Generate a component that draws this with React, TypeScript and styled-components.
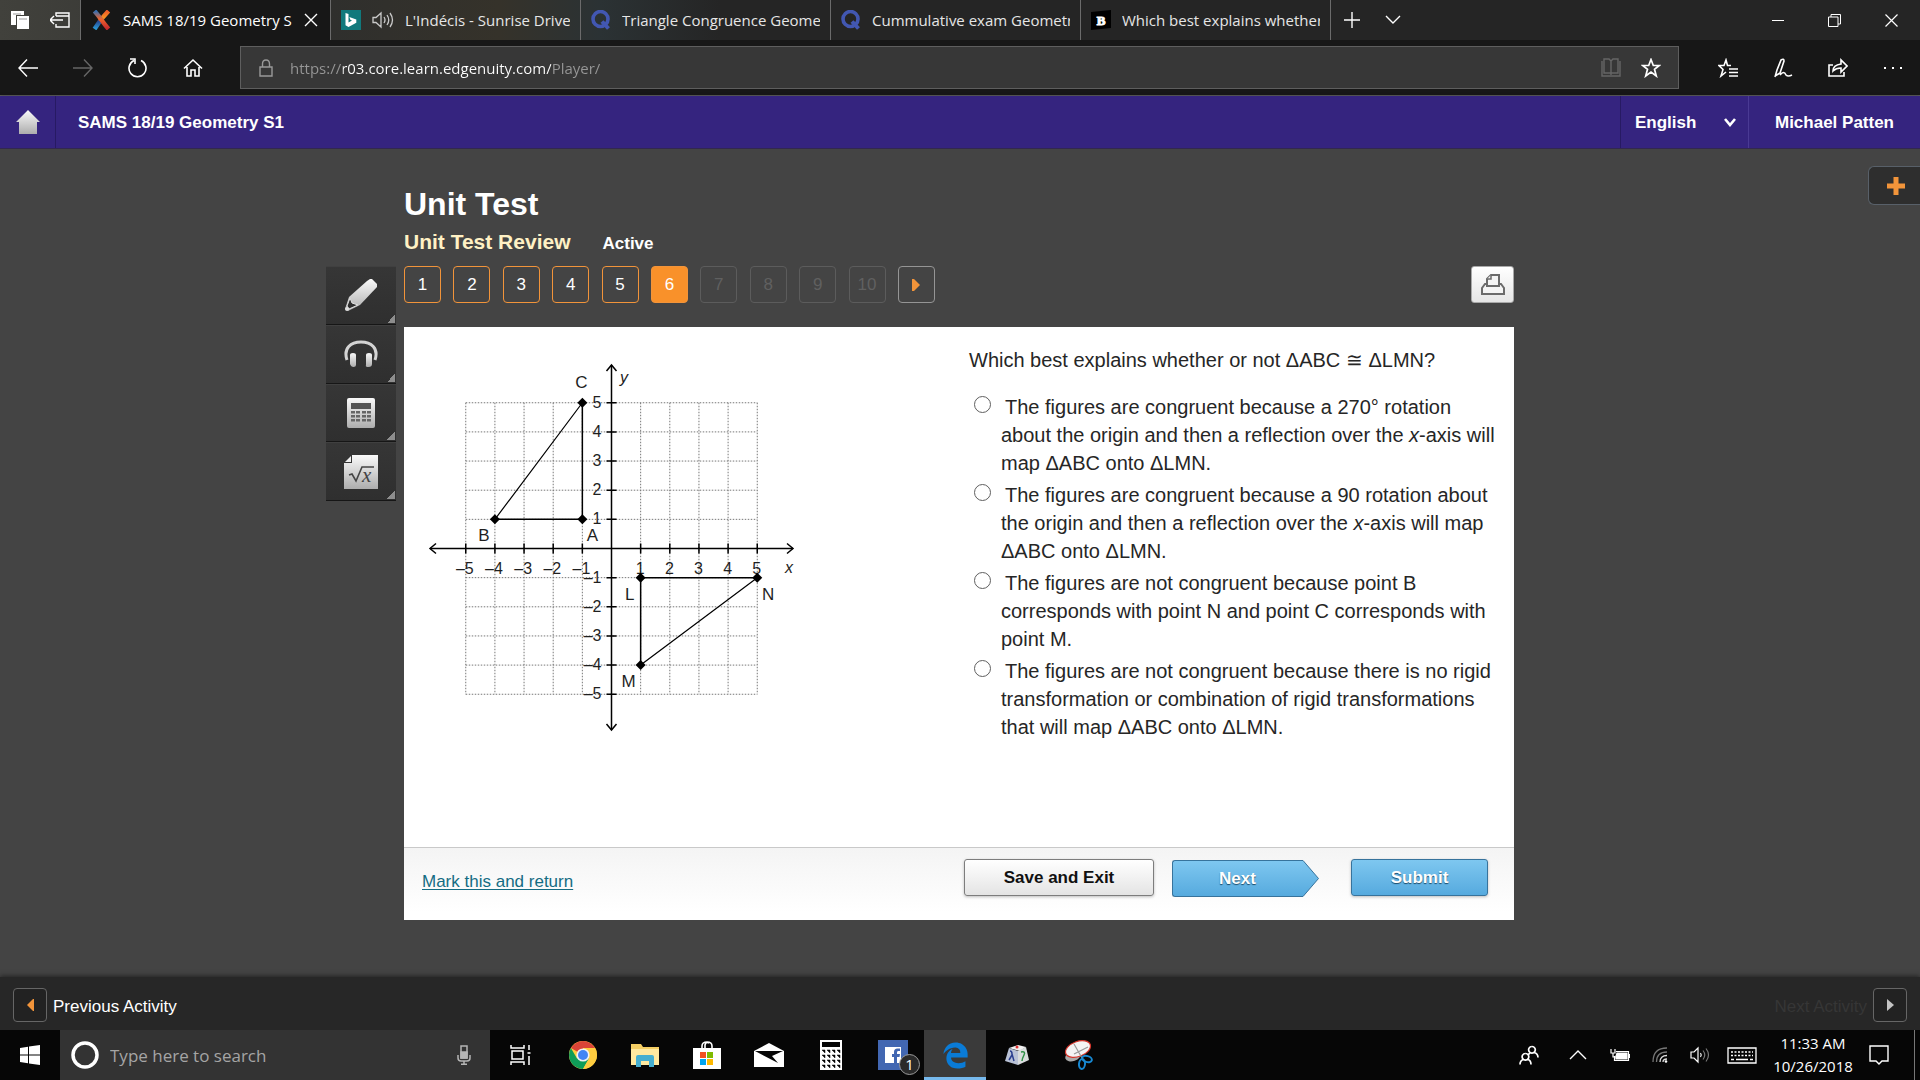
import React, { useState } from "react";
import styled, { createGlobalStyle, css } from "styled-components";
import { FaEdgeLegacy } from "react-icons/fa";

const ui = `"Open Sans", "Noto Sans", sans-serif`;
const arial = `"Liberation Sans", Arial, sans-serif`;

const GlobalStyle = createGlobalStyle`
  * { box-sizing: border-box; }
  html, body { margin: 0; padding: 0; background: #444; }
  body { font-family: ${arial}; }
  button, input, select { font: inherit; color: inherit; margin: 0; }
  button { padding: 0; border: 0; background: none; cursor: pointer; }
  svg { display: block; flex: none; }
`;

const Screen = styled.div`
  min-height: 100vh;
  display: flex;
  flex-direction: column;
`;

/* ---------- browser chrome ---------- */

const TabStrip = styled.div`
  display: flex;
  height: 40px;
  background: linear-gradient(90deg, #41413c 0, #2f2f2d 330px, #35322a 500px, #2b3234 600px, #252525 720px, #252525 100%);
  color: #e6e6e6;
  font-family: ${ui};
  font-size: 15px;
`;

const StripActions = styled.div`
  width: 81px;
  display: flex;
  align-items: center;
  justify-content: space-between;
  padding: 0 10px 0 11px;
  border-right: 1px solid #6b6b6b;
`;

const Tab = styled.div<{ $active?: boolean }>`
  width: 250px;
  display: flex;
  align-items: center;
  padding: 0 10px;
  border-right: 1px solid #6b6b6b;
  ${(p) => p.$active && css`padding-right: 0; background: #171717; color: #fff;`}
`;

const TabLabel = styled.button`
  flex: 1;
  min-width: 0;
  display: flex;
  align-items: center;
  gap: 11px;
  text-align: left;
  line-height: 24px;
`;

const TabTitle = styled.span`
  flex: 1;
  min-width: 0;
  overflow: hidden;
  white-space: nowrap;
`;

const IconButton = styled.button<{ $w?: number }>`
  width: ${(p) => p.$w ?? 55}px;
  height: 40px;
  display: grid;
  place-items: center;
  flex: none;
`;

const WindowButtons = styled.div`
  margin-left: auto;
  display: flex;
`;

const AddressRow = styled.div`
  height: 56px;
  display: flex;
  align-items: center;
  background: #171717;
  border-bottom: 1px solid #5b5b5b;
  color: #fff;
`;

const NavButtons = styled.div`
  width: 240px;
  display: flex;
`;

const AddressBox = styled.div`
  flex: 1;
  height: 43px;
  display: flex;
  align-items: center;
  padding: 0 7px 0 18px;
  background: #373737;
  border: 1px solid #5e5e5e;
`;

const AddressInput = styled.input`
  flex: 1;
  min-width: 0;
  height: 30px;
  margin-left: 17px;
  padding: 0;
  border: 0;
  outline: 0;
  font-family: ${ui};
  font-size: 15px;
  background: linear-gradient(90deg, #979797 53px, #fff 53px, #fff 261px, #979797 261px);
  -webkit-background-clip: text;
  background-clip: text;
  -webkit-text-fill-color: transparent;
`;

const BrowserTools = styled.div`
  display: flex;
  padding-left: 21px;
`;

/* ---------- course header ---------- */

const CourseBar = styled.header`
  height: 53px;
  display: flex;
  align-items: center;
  background: #35247f;
  border-bottom: 1px solid #32284f;
  box-shadow: 0 1px 4px rgba(0, 0, 0, 0.4);
  color: #fff;
  font-size: 17px;
  font-weight: bold;
`;

const HomeLink = styled.a`
  width: 56px;
  height: 100%;
  display: grid;
  place-items: center;
  border-right: 1px solid #271a63;
`;

const CourseName = styled.span`
  flex: 1;
  padding: 2px 0 0 22px;
`;

const LanguageBox = styled.label`
  width: 129px;
  height: 100%;
  display: flex;
  align-items: center;
  justify-content: space-between;
  padding: 0 12px 0 14px;
  border-left: 1px solid #271a63;
  border-right: 1px solid #4a3a94;
`;

const LanguageSelect = styled.select`
  appearance: none;
  width: 80px;
  border: 0;
  padding: 0;
  background: transparent;
  font-weight: bold;
`;

const UserName = styled.button`
  width: 171px;
  height: 100%;
  padding-top: 2px;
  font-weight: bold;
`;

/* ---------- test stage ---------- */

const Stage = styled.main`
  flex: 1;
  display: grid;
  grid-template-columns: 1fr minmax(0, 1110px) 1fr;
  padding: 0 2px 57px 0;
  background: #444;
`;

const ToolRail = styled.div`
  justify-self: end;
  align-self: start;
  width: 70px;
  height: 235px;
  margin: 117px 8px 0 0;
  display: flex;
  flex-direction: column;
`;

const ToolButton = styled.button`
  flex: 1;
  display: grid;
  place-items: center;
  background:
    linear-gradient(135deg, transparent 50%, #8d8d8d 50%) right 1px bottom 1px / 8px 8px no-repeat,
    linear-gradient(#363636, #2f2f2f);
  border-bottom: 1px solid #161616;
  border-top: 1px solid #404040;
`;

const TestColumn = styled.div`
  display: flex;
  flex-direction: column;
  padding-top: 37px;
`;

const TestTitle = styled.h1`
  margin: 0;
  color: #fff;
  font-size: 32px;
  line-height: 36px;
`;

const TestSubtitle = styled.div`
  display: flex;
  align-items: baseline;
  gap: 32px;
  margin-top: 8px;
  line-height: 24px;
`;

const ReviewName = styled.h2`
  margin: 0;
  color: #fff1c4;
  font-size: 21px;
`;

const Status = styled.span`
  color: #fff;
  font-size: 17px;
  font-weight: bold;
`;

const QuestionNav = styled.div`
  display: flex;
  justify-content: space-between;
  align-items: center;
  margin: 10px 0 24px;
`;

const QuestionList = styled.nav`
  width: 531px;
  display: flex;
  justify-content: space-between;
`;

type QState = "done" | "current" | "locked" | "next";

const QuestionButton = styled.button<{ $state: QState }>`
  width: 37px;
  height: 37px;
  display: grid;
  place-items: center;
  border: 1px solid #f2943a;
  border-radius: 4px;
  color: #fff;
  font-size: 17px;
  ${(p) => p.$state === "current" && css`background: #f9912a;`}
  ${(p) => p.$state === "locked" && css`border-color: #5c5c5c; color: #606060;`}
  ${(p) => p.$state === "next" && css`border-color: #959595;`}
`;

const PrintButton = styled.button`
  width: 43px;
  height: 37px;
  display: grid;
  place-items: center;
  border: 1px solid #a9a9a9;
  border-radius: 3px;
  background: linear-gradient(#fff, #e6e6e6);
`;

const Card = styled.section`
  flex: 1;
  display: flex;
  flex-direction: column;
  background: #fff;
  color: #262626;
`;

const CardBody = styled.div`
  flex: 1;
  display: grid;
  grid-template-columns: 1fr 1fr;
`;

const Figure = styled.div`
  padding: 23px 16px;
`;

const QuestionPane = styled.fieldset`
  min-width: 0;
  margin: 0;
  padding: 19px 18px 0 10px;
  border: 0;
  font-size: 20px;
  line-height: 28px;
`;

const Prompt = styled.p`
  margin: 0 0 19px;
`;

const Congruent = styled.span`
  font-family: "Liberation Serif", "DejaVu Serif", serif;
`;

const OptionRow = styled.label`
  display: flex;
  gap: 10px;
  padding-left: 5px;
  margin-bottom: 4px;
`;

const Radio = styled.input`
  appearance: none;
  flex: none;
  width: 17px;
  height: 17px;
  margin: 3px 0 0;
  border: 1px solid #5f5f5f;
  border-radius: 50%;
  background: #fff;
  &:checked { background: radial-gradient(#333 0 4px, #fff 5px); }
`;

const OptionText = styled.span`
  text-indent: 4px;
`;

const CardFooter = styled.div`
  height: 73px;
  display: flex;
  align-items: flex-start;
  padding: 11px 26px 0 18px;
  border-top: 1px solid #c9c9c9;
  background: linear-gradient(#f4f4f4, #fff 90%);
`;

const MarkLink = styled.a`
  margin-right: auto;
  padding-top: 12px;
  color: #146c83;
  font-size: 17px;
  line-height: 22px;
  text-underline-offset: 2px;
`;

const PushButton = styled.button<{ $blue?: boolean }>`
  width: ${(p) => (p.$blue ? 137 : 190)}px;
  height: 37px;
  border: 1px solid #7d7d7d;
  border-radius: 3px;
  background: linear-gradient(#fff, #e4e4e4);
  box-shadow: 0 1px 3px rgba(0, 0, 0, 0.25);
  color: #111;
  font-size: 17px;
  font-weight: bold;
  ${(p) => p.$blue && css`
    border-color: #37739c;
    background: linear-gradient(#7ec7f0, #56aade);
    color: #fff;
    text-shadow: 0 1px 1px #1c4a68;
  `}
`;

const NextButton = styled.button`
  width: 147px;
  height: 37px;
  display: flex;
  margin: 1px 32px 0 18px;
  color: #fff;
  font-size: 17px;
  font-weight: bold;
  text-shadow: 0 1px 1px #1c4a68;
`;

const NextFace = styled.span`
  flex: 1;
  height: 37px;
  line-height: 35px;
  border: 1px solid #37739c;
  border-right: 0;
  border-radius: 3px 0 0 3px;
  background: linear-gradient(#7ec7f0, #56aade);
`;

const SideDrawer = styled.button`
  justify-self: end;
  align-self: start;
  width: 52px;
  height: 39px;
  margin: 17px -2px 0 0;
  display: grid;
  place-items: center;
  padding-left: 2px;
  border: 1px solid #586069;
  border-right: 0;
  border-radius: 6px 0 0 6px;
  background: #2e2e2e;
`;

const ActivityBar = styled.footer`
  height: 53px;
  display: flex;
  align-items: center;
  justify-content: space-between;
  padding: 3px 13px 0;
  background: #272727;
  box-shadow: 0 -1px 5px rgba(0, 0, 0, 0.5);
`;

const ActivityButton = styled.button<{ $dim?: boolean }>`
  display: flex;
  align-items: center;
  gap: 6px;
  color: ${(p) => (p.$dim ? "#363636" : "#fff")};
  font-size: 17px;
`;

const ActivityLabel = styled.span`
  padding-top: 3px;
`;

const ActivityIcon = styled.span`
  width: 34px;
  height: 34px;
  display: grid;
  place-items: center;
  border: 1px solid #666;
  border-radius: 4px;
  background: #222;
`;

/* ---------- taskbar ---------- */

const Taskbar = styled.div`
  height: 50px;
  display: flex;
  background: #060606;
  color: #fff;
  font-family: ${ui};
`;

const StartButton = styled.button`
  width: 60px;
  display: grid;
  place-items: center;
`;

const SearchBox = styled.label`
  width: 430px;
  display: flex;
  align-items: center;
  padding: 0 19px 0 11px;
  background: #333;
`;

const SearchInput = styled.input`
  flex: 1;
  min-width: 0;
  margin-left: 11px;
  padding: 0;
  border: 0;
  outline: 0;
  background: transparent;
  font-size: 17px;
  &::placeholder { color: #a5a5a5; opacity: 1; }
`;

const TaskItem = styled.button<{ $active?: boolean }>`
  position: relative;
  width: 62px;
  display: grid;
  place-items: center;
  ${(p) => p.$active && css`background: #3a3a3a; box-shadow: inset 0 -3px #76b9ed;`}
`;

const Badge = styled.span`
  position: absolute;
  left: 37px;
  top: 24px;
  width: 21px;
  height: 21px;
  border: 1px solid #9a9a9a;
  border-radius: 50%;
  background: #2a2a2a;
  font-size: 15px;
  line-height: 19px;
  text-align: center;
`;

const Tray = styled.div`
  margin-left: auto;
  display: flex;
  padding-right: 5px;
`;

const TrayItem = styled.button<{ $w: number }>`
  width: ${(p) => p.$w}px;
  display: grid;
  place-items: center;
`;

const Clock = styled.div`
  width: 96px;
  padding-top: 2px;
  font-size: 15px;
  line-height: 23px;
  text-align: center;
`;

const Notifications = styled(TrayItem)`
  padding-right: 18px;
  border-right: 1px solid #777;
`;

/* ---------- icons ---------- */

type LineProps = {
  w?: number;
  h?: number;
  d: string;
  color?: string;
  sw?: number;
  fill?: string;
};

const Line = ({ w = 20, h = 20, d, color = "#fff", sw = 1.4, fill = "none" }: LineProps) => (
  <svg width={w} height={h} viewBox={`0 0 ${w} ${h}`} fill={fill} stroke={color} strokeWidth={sw} aria-hidden="true">
    <path d={d} />
  </svg>
);

const TabsAsideIcon = () => (
  <svg width="18" height="18" viewBox="0 0 18 18" aria-hidden="true">
    <path d="M0 0h13v4H5v10H0z" fill="#fff" />
    <path d="M6 5h12v13H6z" fill="#fff" />
    <path d="M2 3h8M8 8h8" stroke="#999" />
  </svg>
);

const EdgenuityLogo = () => (
  <svg width="21" height="20" viewBox="0 0 21 20" fill="none" strokeWidth="4.5" aria-hidden="true">
    <defs>
      <linearGradient id="ed" x1="0" y1="0" x2="0" y2="1">
        <stop offset="0" stopColor="#2f6fb4" /><stop offset=".45" stopColor="#f0642c" /><stop offset="1" stopColor="#c1272d" />
      </linearGradient>
      <linearGradient id="eu" x1="0" y1="1" x2="0" y2="0">
        <stop offset="0" stopColor="#2a9ad6" /><stop offset=".45" stopColor="#27458f" /><stop offset=".6" stopColor="#f7941e" /><stop offset="1" stopColor="#ee5a2a" />
      </linearGradient>
    </defs>
    <path d="M17.500 1Q12 7 9 11L3.500 19" stroke="url(#eu)" />
    <path d="M3.500 1Q7 5 10.500 10T17.500 19" stroke="url(#ed)" />
  </svg>
);

const BingLogo = () => (
  <svg width="20" height="20" viewBox="0 0 20 20" aria-hidden="true">
    <path d="M0 0h20v20H0z" fill="#11797c" />
    <path d="M4.500 3l3 1v8.500l3.500-2-1.700-.8-1-2.700 7 2.500v3.200L7.500 17l-3-1.700z" fill="#fff" />
  </svg>
);

const QuizletLogo = () => (
  <svg width="20" height="20" viewBox="0 0 20 20" fill="none" stroke="#4257b2" aria-hidden="true">
    <ellipse cx="9.500" cy="9" rx="7.500" ry="7.500" strokeWidth="3.600" />
    <path d="M11 11.500l6.500 7" strokeWidth="4" />
  </svg>
);

const BrainlyLogo = () => (
  <svg width="20" height="20" viewBox="0 0 20 20" aria-hidden="true">
    <path d="M0 2L20 0v18L0 20z" fill="#000" />
    <text x="10" y="14.500" textAnchor="middle" fontFamily="Liberation Serif, serif" fontWeight="bold" fontSize="13" fill="#fff" stroke="#fff">B</text>
  </svg>
);

const SpeakerIcon = () => (
  <svg width="22" height="20" viewBox="0 0 22 20" fill="none" stroke="#c9c9c9" strokeWidth="1.300" aria-hidden="true">
    <path d="M1 7.500h3l5-4.500v14l-5-4.500H1zM12 7q2 3 0 6M15 5q3.500 5 0 10M18 3q5 7 0 14" />
  </svg>
);

const Metal = ({ id }: { id: string }) => (
  <defs>
    <linearGradient id={id} x1="0" y1="0" x2="0" y2="1">
      <stop offset="0" stopColor="#fafafa" /><stop offset="1" stopColor="#adadad" />
    </linearGradient>
  </defs>
);

const HomeSolid = () => (
  <svg width="24" height="25" viewBox="0 0 24 25" aria-hidden="true">
    <Metal id="mh" />
    <path d="M12 0l12 12h-3v12H3V12H0z" fill="url(#mh)" />
  </svg>
);

const PencilIcon = () => (
  <svg width="34" height="34" viewBox="0 0 34 34" aria-hidden="true">
    <Metal id="mp" />
    <path d="M26 1h2l5 5v3L16 27 4 33l-3-2L5 19 23 3z" fill="url(#mp)" />
    <path d="M6 20l2 5 6 2-9 4-2-3z" fill="#2e2e2e" stroke="#ddd" />
    <circle cx="3" cy="31" r="2" fill="#ddd" />
  </svg>
);

const HeadphonesIcon = () => (
  <svg width="34" height="28" viewBox="0 0 34 28" fill="none" aria-hidden="true">
    <Metal id="mf" />
    <path d="M3 20C-1 8 7 2 17 2s18 6 14 18" stroke="#d4d4d4" strokeWidth="3" />
    <path d="M6 15q0-2 3-2t3 2v10q0 2-2.500 2T6 24zM22 15q0-2 3-2t3 2v9q0 3-3.500 3T22 25z" fill="url(#mf)" />
  </svg>
);

const CalcIcon = () => (
  <svg width="28" height="30" viewBox="0 0 28 30" aria-hidden="true">
    <Metal id="mc" />
    <rect width="28" height="30" rx="2" fill="url(#mc)" />
    <path d="M4 5h20v6H4z" fill="#555" />
    {[13, 17, 21].map((y) => [4, 9, 15, 20].map((x) => <rect key={`${x}-${y}`} x={x} y={y} width="4" height="2.500" fill="#666" />))}
  </svg>
);

const FormulaIcon = () => (
  <svg width="34" height="34" viewBox="0 0 34 34" aria-hidden="true">
    <Metal id="mr" />
    <path d="M8 0h26v34H0V8h8z" fill="url(#mr)" />
    <path d="M1 7l6-6v6z" fill="#eee" />
    <path d="M5 20l3-1 4 7 6-14h12" fill="none" stroke="#444" strokeWidth="1.600" />
    <text x="18" y="27" fontFamily="Liberation Serif, serif" fontStyle="italic" fontSize="21" fill="#444">x</text>
  </svg>
);

const PrinterIcon = () => (
  <svg width="24" height="22" viewBox="0 0 24 22" fill="#f4f4f4" stroke="#6b6b6b" strokeWidth="2" aria-hidden="true">
    <path d="M4 10h16l3 4v6H1v-6z" />
    <path d="M6 12V5l4-4h8v11z" />
    <path d="M6 5h4V1" strokeWidth="1.500" />
  </svg>
);

const ChromeIcon = () => (
  <svg width="28" height="28" viewBox="0 0 28 28" aria-hidden="true">
    <circle cx="14" cy="14" r="14" fill="#ffcd40" />
    <path d="M14 14L1.900 7A14 14 0 0 1 26.100 7H14z" fill="#db4437" />
    <path d="M1.900 7A14 14 0 0 0 14 28l6-10.500L14 14 8 17.500z" fill="#0f9d58" />
    <path d="M14 7h12.100A14 14 0 0 1 14 28l6-10.500z" fill="#ffcd40" />
    <circle cx="14" cy="14" r="6.600" fill="#f1f1f1" />
    <circle cx="14" cy="14" r="5" fill="#4285f4" />
  </svg>
);

const FolderIcon = () => (
  <svg width="28" height="24" viewBox="0 0 28 24" aria-hidden="true">
    <path d="M0 1h10l2 3h16v18H0z" fill="#f5cf64" />
    <path d="M0 6h28v16H0z" fill="#ffe9a0" />
    <path d="M5 24V14q0-2 2-2h14q2 0 2 2v10h-5v-6h-8v6z" fill="#45aed0" />
  </svg>
);

const StoreIcon = () => (
  <svg width="30" height="30" viewBox="0 0 30 30" aria-hidden="true">
    <path d="M10 9V6q0-4 5-4t5 4v3M13 9V5q1-4 4-2" fill="none" stroke="#fff" strokeWidth="1.600" />
    <path d="M1 8h28v21H1z" fill="#fff" />
    <path d="M8 12h6v6H8z" fill="#f25022" /><path d="M15 12h6v6h-6z" fill="#7fba00" />
    <path d="M8 19h6v6H8z" fill="#00a4ef" /><path d="M15 19h6v6h-6z" fill="#ffb900" />
  </svg>
);

const MailIcon = () => (
  <svg width="30" height="24" viewBox="0 0 30 24" aria-hidden="true">
    <path d="M0 8l15-8 15 8v16H0z" fill="#fff" /><path d="M1 8h28l-11 5 6 7z" fill="#060606" />
  </svg>
);

const WinCalcIcon = () => (
  <svg width="22" height="30" viewBox="0 0 22 30" aria-hidden="true">
    <path d="M0 0h22v30H0z" fill="#fff" /><path d="M2 2h18v5H2z" fill="#060606" />
    {[10, 15, 20, 25].map((y) => [2, 7, 12, 17].map((x) => <path key={`${x}-${y}`} d={`M${x} ${y}h3v3z`} fill="#060606" stroke="#060606" strokeWidth=".5" />))}
  </svg>
);

const FacebookIcon = () => (
  <svg width="30" height="30" viewBox="0 0 30 30" aria-hidden="true">
    <path d="M0 0h30v30H0z" fill="#4267b2" /><path d="M7 7h16v16H7z" fill="#fff" />
    <path d="M16 23v-6h-2v-3h2v-2q0-3.500 3.500-3.500H22V11h-2q-1 0-1 1.500V14h3l-.5 3H19v6z" fill="#4267b2" />
  </svg>
);

const CubeIcon = () => (
  <svg width="26" height="20" viewBox="0 0 26 20" aria-hidden="true">
    <path d="M5 3l9-3 8 2-6 4z" fill="#f2f2f2" /><path d="M5 3l9 3v14L1 16z" fill="#b9c2d6" /><path d="M14 6l8-4 3 13-11 5z" fill="#d9dcdd" />
    <path d="M6 6q2 0 2 3l2 7M8 10l-3 5" stroke="#2b3f8f" strokeWidth="1.500" fill="none" /><path d="M17 7q5-1 3 3t-2 6" stroke="#2f8f46" strokeWidth="1.500" fill="none" /><circle cx="13" cy="2" r="1.500" fill="#d33" />
  </svg>
);

const SnipIcon = () => (
  <svg width="30" height="30" viewBox="0 0 30 30" fill="none" aria-hidden="true">
    <ellipse cx="9" cy="16" rx="8" ry="5" fill="#aaa" transform="rotate(-20 9 16)" />
    <ellipse cx="14" cy="9" rx="13" ry="7.500" fill="#f4f4f4" stroke="#d6352b" strokeWidth="1.200" transform="rotate(-20 14 9)" />
    <path d="M10 4l8 14M24 7L10 14" stroke="#999" strokeWidth="1.200" />
    <ellipse cx="23" cy="19" rx="5" ry="3" stroke="#1787d0" strokeWidth="2" transform="rotate(15 23 19)" />
    <ellipse cx="18" cy="24" rx="3" ry="5" stroke="#1787d0" strokeWidth="2" transform="rotate(5 18 24)" />
  </svg>
);

/* ---------- coordinate plane ---------- */

const UNIT = 29.15;
const OX = 191.5;
const OY = 198.5;
const px = (x: number) => OX + x * UNIT;
const py = (y: number) => OY - y * UNIT;
const ticks = [-5, -4, -3, -2, -1, 1, 2, 3, 4, 5];

const vertices: { name: string; x: number; y: number; dx: number; dy: number }[] = [
  { name: "A", x: -1, y: 1, dx: 10, dy: 22 },
  { name: "B", x: -4, y: 1, dx: -11, dy: 22 },
  { name: "C", x: -1, y: 5, dx: -1, dy: -15 },
  { name: "L", x: 1, y: -1, dx: -11, dy: 22 },
  { name: "M", x: 1, y: -4, dx: -12, dy: 22 },
  { name: "N", x: 5, y: -1, dx: 11, dy: 22 },
];

const Plane = () => (
  <svg width="400" height="390" viewBox="0 0 400 390" role="img" aria-label="Triangles ABC and LMN on a coordinate plane" fontFamily="Liberation Sans, Arial, sans-serif">
    <g stroke="#777" strokeDasharray="1.500 1.500">
      {[...ticks, 0].map((t) => (
        <React.Fragment key={t}>
          <line x1={px(t)} x2={px(t)} y1={py(5)} y2={py(-5)} />
          <line x1={px(-5)} x2={px(5)} y1={py(t)} y2={py(t)} />
        </React.Fragment>
      ))}
    </g>
    <g stroke="#000" strokeWidth="1.500" fill="none">
      <path d={`M10 ${OY}H373M${OX} 15V380`} />
      <path d={`M16 ${OY - 5}l-6 5 6 5M367 ${OY - 5}l6 5-6 5M${OX - 5} 21l5-6 5 6M${OX - 5} 374l5 6 5-6`} />
      {ticks.map((t) => (
        <path key={t} d={`M${px(t)} ${OY - 5}v10M${OX - 5} ${py(t)}h10`} />
      ))}
      <path d={`M${px(-4)} ${py(1)}H${px(-1)}V${py(5)}`} />
      <path d={`M${px(1)} ${py(-4)}V${py(-1)}H${px(5)}`} />
      <path strokeWidth="1.200" d={`M${px(-4)} ${py(1)}L${px(-1)} ${py(5)}M${px(1)} ${py(-4)}L${px(5)} ${py(-1)}`} />
    </g>
    <g fontSize="16" fill="#1f1f1f">
      {ticks.map((t) => (
        <React.Fragment key={t}>
          <text x={t < 0 ? px(t) + 8 : px(t) + 4} y={OY + 25} textAnchor="end">{t < 0 ? `–${-t}` : t}</text>
          <text x={OX - 10} y={py(t) + 5} textAnchor="end">{t < 0 ? `–${-t}` : t}</text>
        </React.Fragment>
      ))}
    </g>
    <g fontSize="17" fill="#1f1f1f" textAnchor="middle">
      {vertices.map((v) => (
        <React.Fragment key={v.name}>
          <path d={`M${px(v.x) - 5} ${py(v.y)}l5-5 5 5-5 5z`} fill="#000" />
          <text x={px(v.x) + v.dx} y={py(v.y) + v.dy}>{v.name}</text>
        </React.Fragment>
      ))}
      <text x="204" y="33" fontStyle="italic" fontSize="16">y</text>
      <text x="369" y="223" fontStyle="italic" fontSize="16">x</text>
    </g>
  </svg>
);

/* ---------- page ---------- */

const tabs = [
  { title: "SAMS 18/19 Geometry S1", icon: <EdgenuityLogo />, active: true },
  { title: "L'Indécis - Sunrise Drive", icon: <BingLogo />, sound: true },
  { title: "Triangle Congruence Geometry", icon: <QuizletLogo /> },
  { title: "Cummulative exam Geometry", icon: <QuizletLogo /> },
  { title: "Which best explains whether", icon: <BrainlyLogo /> },
];

const options: React.ReactNode[] = [
  <>The figures are congruent because a 270° rotation about the origin and then a reflection over the <i>x</i>-axis will map ΔABC onto ΔLMN.</>,
  <>The figures are congruent because a 90 rotation about the origin and then a reflection over the <i>x</i>-axis will map ΔABC onto ΔLMN.</>,
  <>The figures are not congruent because point B corresponds with point N and point C corresponds with point M.</>,
  <>The figures are not congruent because there is no rigid transformation or combination of rigid transformations that will map ΔABC onto ΔLMN.</>,
];

const taskItems = [
  { name: "Task View", icon: <Line w={22} h={20} d="M1 0v3h13V0M2 6h11v8H2zM1 20v-3h13v3M19 0v5M19 11v9M17.500 8h3" sw={1.5} /> },
  { name: "Chrome", icon: <ChromeIcon /> },
  { name: "File Explorer", icon: <FolderIcon /> },
  { name: "Store", icon: <StoreIcon /> },
  { name: "Mail", icon: <MailIcon /> },
  { name: "Calculator", icon: <WinCalcIcon /> },
  { name: "Facebook", icon: <FacebookIcon />, badge: 1 },
  { name: "Edge", icon: <FaEdgeLegacy size={27} color="#0a7bd6" />, active: true },
  { name: "Audio", icon: <CubeIcon /> },
  { name: "Snipping Tool", icon: <SnipIcon /> },
];

const starPath = "M10 1.500l2.300 6h6l-4.800 3.800 1.800 6.700-5.300-4-5.300 4 1.800-6.700L1.700 7.500h6z";

export default function App() {
  const [url, setUrl] = useState("https://r03.core.learn.edgenuity.com/Player/");
  const [choice, setChoice] = useState(-1);

  return (
    <Screen>
      <GlobalStyle />
      <TabStrip>
        <StripActions>
          <button aria-label="Tabs you've set aside"><TabsAsideIcon /></button>
          <button aria-label="Set these tabs aside"><Line d="M6 6V3h13v14H6v-3M6 6h13M0 10h13M4 6l-4 4 4 4" /></button>
        </StripActions>
        {tabs.map((t) => (
          <Tab key={t.title} $active={t.active}>
            <TabLabel>
              {t.icon}
              {t.sound && <SpeakerIcon />}
              <TabTitle>{t.title}</TabTitle>
            </TabLabel>
            {t.active && <IconButton $w={38} aria-label="Close tab"><Line w={14} h={14} d="M1 1l12 12M13 1L1 13" /></IconButton>}
          </Tab>
        ))}
        <IconButton $w={42} aria-label="New tab"><Line w={16} h={16} d="M8 0v16M0 8h16" /></IconButton>
        <IconButton $w={40} aria-label="Tab previews"><Line w={16} h={10} d="M1 1l7 7 7-7" /></IconButton>
        <WindowButtons>
          <IconButton $w={57} aria-label="Minimize"><Line w={12} h={12} d="M0 6.500h12" sw={1} /></IconButton>
          <IconButton $w={57} aria-label="Restore"><Line w={13} h={13} d="M3 3V.500h9.500V10H10M.500 3H10v9.500H.500z" sw={1} /></IconButton>
          <IconButton $w={57} aria-label="Close"><Line w={13} h={13} d="M.500.500l12 12M12.500.500l-12 12" sw={1.2} /></IconButton>
        </WindowButtons>
      </TabStrip>

      <AddressRow>
        <NavButtons>
          <IconButton aria-label="Back"><Line d="M1 10h19M9 1.500L1 10l8 8.500" /></IconButton>
          <IconButton aria-label="Forward"><Line color="#666" d="M0 10h19M11 1.500l8 8.500-8 8.500" /></IconButton>
          <IconButton aria-label="Refresh"><Line d="M13 2.500a8.500 8.500 0 1 1-7 0M2 1h5v5" sw={1.6} /></IconButton>
          <IconButton aria-label="Home"><Line d="M1 10.500L10 2l9 8.500M4 9v9h4v-6h4v6h4V9" sw={1.6} /></IconButton>
        </NavButtons>
        <AddressBox>
          <Line w={14} h={18} color="#999" d="M1 8h12v9H1zM3.500 8V5q0-4 3.500-4t3.500 4v3" />
          <AddressInput aria-label="Address" value={url} onChange={(e) => setUrl(e.target.value)} />
          <IconButton $w={40} aria-label="Reading view"><Line color="#666" d="M10 3v14M1 3v15h18V3M3 1h5l2 2 2-2h5v14H3z" /></IconButton>
          <IconButton $w={40} aria-label="Add to favorites"><Line d={starPath} sw={1.7} /></IconButton>
        </AddressBox>
        <BrowserTools>
          <IconButton aria-label="Favorites"><Line d="M13 7.500L9.500 7.500 8 2 6 7.500H1l4 4L3 18l5-4M11 11h9M11 14.500h9M11 18h9" sw={1.6} /></IconButton>
          <IconButton aria-label="Notes"><Line d="M2 19l2-7L8 2q3-2 3 1L7 15l-5 3M7 17q4-5 6 0 2 2 6 0" sw={1.6} /></IconButton>
          <IconButton aria-label="Share"><Line d="M5 7H1v11h15v-4M5 13q0-6 8-7V2l6 6-6 6v-4q-5 0-8 3z" sw={1.6} /></IconButton>
          <IconButton aria-label="More"><Line d="M1 10h2M9 10h2M17 10h2" sw={2} /></IconButton>
        </BrowserTools>
      </AddressRow>

      <CourseBar>
        <HomeLink href="#home" aria-label="Home"><HomeSolid /></HomeLink>
        <CourseName>SAMS 18/19 Geometry S1</CourseName>
        <LanguageBox>
          <LanguageSelect aria-label="Language" defaultValue="English">
            <option>English</option>
          </LanguageSelect>
          <Line w={12} h={9} d="M1 1l5 6 5-6" sw={2.6} />
        </LanguageBox>
        <UserName>Michael Patten</UserName>
      </CourseBar>

      <Stage>
        <ToolRail>
          <ToolButton aria-label="Highlighter"><PencilIcon /></ToolButton>
          <ToolButton aria-label="Read aloud"><HeadphonesIcon /></ToolButton>
          <ToolButton aria-label="Calculator"><CalcIcon /></ToolButton>
          <ToolButton aria-label="Formulas"><FormulaIcon /></ToolButton>
        </ToolRail>

        <TestColumn>
          <TestTitle>Unit Test</TestTitle>
          <TestSubtitle>
            <ReviewName>Unit Test Review</ReviewName>
            <Status>Active</Status>
          </TestSubtitle>
          <QuestionNav>
            <QuestionList aria-label="Questions">
              {Array.from({ length: 10 }, (_, i) => i + 1).map((n) => (
                <QuestionButton key={n} $state={n < 6 ? "done" : n === 6 ? "current" : "locked"}>{n}</QuestionButton>
              ))}
              <QuestionButton $state="next" aria-label="Next question">
                <svg width="8" height="12" viewBox="0 0 8 12"><path d="M0 0h2l6 6-6 6H0z" fill="#f2943a" /></svg>
              </QuestionButton>
            </QuestionList>
            <PrintButton aria-label="Print"><PrinterIcon /></PrintButton>
          </QuestionNav>

          <Card>
            <CardBody>
              <Figure><Plane /></Figure>
              <QuestionPane>
                <Prompt>Which best explains whether or not ΔABC <Congruent>≅</Congruent> ΔLMN?</Prompt>
                {options.map((o, i) => (
                  <OptionRow key={i}>
                    <Radio type="radio" name="answer" checked={choice === i} onChange={() => setChoice(i)} />
                    <OptionText>{o}</OptionText>
                  </OptionRow>
                ))}
              </QuestionPane>
            </CardBody>
            <CardFooter>
              <MarkLink href="#mark">Mark this and return</MarkLink>
              <PushButton>Save and Exit</PushButton>
              <NextButton>
                <NextFace>Next</NextFace>
                <svg width="17" height="37" viewBox="0 0 17 37" aria-hidden="true">
                  <defs>
                    <linearGradient id="tip" x1="0" y1="0" x2="0" y2="1">
                      <stop offset="0" stopColor="#7ec7f0" /><stop offset="1" stopColor="#56aade" />
                    </linearGradient>
                  </defs>
                  <path d="M0 .500h1L16.500 18.500 1 36.500H0" fill="url(#tip)" stroke="#37739c" />
                </svg>
              </NextButton>
              <PushButton $blue>Submit</PushButton>
            </CardFooter>
          </Card>
        </TestColumn>

        <SideDrawer aria-label="Open panel">
          <Line w={18} h={18} d="M9 0v18M0 9h18" color="#f2943a" sw={5} />
        </SideDrawer>
      </Stage>

      <ActivityBar>
        <ActivityButton>
          <ActivityIcon><svg width="7" height="12" viewBox="0 0 7 12"><path d="M7 0H6L0 6l6 6h1z" fill="#f2943a" /></svg></ActivityIcon>
          <ActivityLabel>Previous Activity</ActivityLabel>
        </ActivityButton>
        <ActivityButton $dim>
          <ActivityLabel>Next Activity</ActivityLabel>
          <ActivityIcon><svg width="7" height="12" viewBox="0 0 7 12"><path d="M0 0l7 6-7 6z" fill="#c4c4c4" /></svg></ActivityIcon>
        </ActivityButton>
      </ActivityBar>

      <Taskbar>
        <StartButton aria-label="Start">
          <svg width="20" height="20" viewBox="0 0 20 20" fill="#fff"><path d="M0 3l8-1.200v7.700H0zM9 1.600L20 0v9.500H9zM0 10.500h8v7.700L0 17zM9 10.500h11V20L9 18.400z" /></svg>
        </StartButton>
        <SearchBox>
          <svg width="28" height="28" viewBox="0 0 28 28" fill="none"><circle cx="14" cy="14" r="12" stroke="#fff" strokeWidth="3.500" /></svg>
          <SearchInput aria-label="Search" placeholder="Type here to search" />
          <svg width="14" height="20" viewBox="0 0 14 20" fill="none" stroke="#b5b5b5" strokeWidth="1.500">
            <path d="M4 1h6v12H4z" /><path d="M4 7h6v6H4z" fill="#b5b5b5" /><path d="M1 10v3q0 3 3 3h6q3 0 3-3v-3M7 16v3M4 19.200h6" />
          </svg>
        </SearchBox>
        {taskItems.map((t) => (
          <TaskItem key={t.name} aria-label={t.name} $active={t.active}>
            {t.icon}
            {t.badge && <Badge>{t.badge}</Badge>}
          </TaskItem>
        ))}
        <Tray>
          <TrayItem $w={52} aria-label="People">
            <Line w={20} h={20} d="M13 1.500a3.300 3.300 0 1 1-.1 0M6.500 8.500a3.300 3.300 0 1 1-.1 0M1 19.500q0-4 3.500-5M12 19.500q0-4-3-5M11 8.500q-1 0-1.500 1M15 7.500q4 1 4 5" sw={1.7} />
          </TrayItem>
          <TrayItem $w={46} aria-label="Show hidden icons"><Line w={18} h={10} d="M1 9l8-8 8 8" /></TrayItem>
          <TrayItem $w={38} aria-label="Battery">
            <svg width="20" height="14" viewBox="0 0 20 14" fill="none" stroke="#fff" strokeWidth="1.200"><path d="M6 3.500h12.500v9H4.500V8M1 1v4h4V1M3 5v4h3M19.500 6v4" /><path d="M7 5h10v6H6V8z" fill="#fff" /></svg>
          </TrayItem>
          <TrayItem $w={42} aria-label="Network">
            <svg width="16" height="16" viewBox="0 0 16 16" fill="none" strokeWidth="1.300"><path d="M1 15Q1 1 15 1M4.500 15Q4.500 5 15 5" stroke="#777" /><path d="M8 15Q8 8.500 15 8.500M11 15q0-3 4-3" stroke="#ddd" /><circle cx="14" cy="14.500" r="1.300" fill="#fff" /></svg>
          </TrayItem>
          <TrayItem $w={38} aria-label="Volume">
            <svg width="20" height="18" viewBox="0 0 20 18" fill="none" stroke="#fff" strokeWidth="1.200"><path d="M1 6h3l4-4v14l-4-4H1zM10.500 7q1.500 2 0 4" /><path d="M13 4.500q3.500 4.500 0 9M16 2.500q5 6.500 0 13" stroke="#777" /></svg>
          </TrayItem>
          <TrayItem $w={46} aria-label="Touch keyboard">
            <svg width="30" height="17" viewBox="0 0 30 17" fill="none" stroke="#fff" strokeWidth="1.300"><path d="M1 1h28v15H1z" /><path d="M4 5h22M4 8.500h22" strokeDasharray="2 1.500" /><path d="M4 12.500h3M9 12.500h12M23 12.500h3" /></svg>
          </TrayItem>
          <Clock>11:33 AM<br />10/26/2018</Clock>
          <Notifications $w={54} aria-label="Notifications">
            <Line w={20} h={20} d="M1 1h18v15h-6l-3 3-3-3H1z" />
          </Notifications>
        </Tray>
      </Taskbar>
    </Screen>
  );
}
